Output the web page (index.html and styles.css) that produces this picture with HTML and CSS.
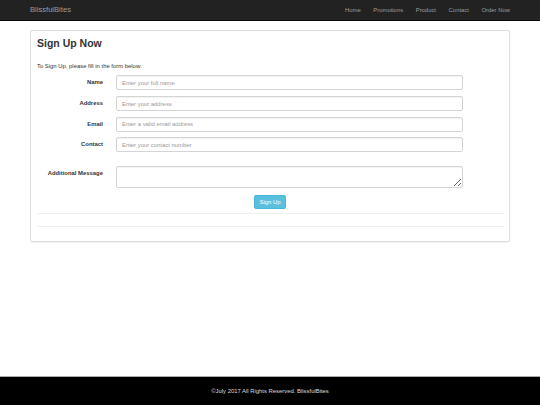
FILE: index.html
```html
<!DOCTYPE html>
<html>
<head>
<meta charset="utf-8">
<title>BlissfulBites - Sign Up</title>
<link rel="stylesheet" href="styles.css">
</head>
<body>
<div class="page">
  <nav class="navbar">
    <a class="brand" href="#">BlissfulBites</a>
    <ul class="nav">
      <li><a href="#">Home</a></li>
      <li><a href="#">Promotions</a></li>
      <li><a href="#">Product</a></li>
      <li><a href="#">Contact</a></li>
      <li><a href="#">Order Now</a></li>
    </ul>
  </nav>
  <main class="main">
    <div class="panel">
      <h3 class="title">Sign Up Now</h3>
      <p class="intro">To Sign Up, please fill in the form below:</p>
      <form class="form">
        <div class="row">
          <label class="label">Name</label>
          <input class="input" type="text" placeholder="Enter your full name">
        </div>
        <div class="row">
          <label class="label">Address</label>
          <input class="input" type="text" placeholder="Enter your address">
        </div>
        <div class="row">
          <label class="label">Email</label>
          <input class="input" type="text" placeholder="Enter a valid email address">
        </div>
        <div class="row">
          <label class="label">Contact</label>
          <input class="input" type="text" placeholder="Enter your contact number">
        </div>
        <div class="row row-msg">
          <label class="label">Additional Message</label>
          <textarea class="input textarea"></textarea>
        </div>
        <div class="actions">
          <button class="btn" type="button">Sign Up</button>
        </div>
      </form>
      <hr class="rule">
      <hr class="rule rule-2">
    </div>
  </main>
  <footer class="footer">©July 2017 All Rights Reserved. BlissfulBites</footer>
</div>
</body>
</html>
```
FILE: styles.css
```css
* { box-sizing: border-box; }
html, body { margin: 0; padding: 0; }
body {
  font-family: "Liberation Sans", Arial, sans-serif;
  font-size: 5.9px;
  line-height: 8.4px;
  color: #333;
  background: #fff;
}
.page {
  min-height: 405px;
  display: flex;
  flex-direction: column;
}
.navbar {
  height: 21px;
  background: #222;
  border-bottom: 1px solid #080808;
  display: flex;
  align-items: center;
  justify-content: space-between;
  padding: 0 30px;
}
.brand {
  color: #9d9d9d;
  text-decoration: none;
  font-size: 7.6px;
}
.nav {
  list-style: none;
  margin: 0;
  padding: 0;
  display: flex;
  gap: 12.6px;
}
.nav a {
  color: #9d9d9d;
  text-decoration: none;
  font-size: 5.9px;
}
.main {
  flex: 1;
  padding: 9px 30px 0;
}
.panel {
  border: 1px solid #ddd;
  border-radius: 2px;
  padding: 7px 6px 14px;
  box-shadow: 0 1px 1px rgba(0,0,0,0.05);
}
.title {
  margin: 0;
  font-size: 10.5px;
  line-height: 11px;
  font-weight: bold;
  color: #333;
}
.intro {
  margin: 13px 0 5px;
}
.form { margin: 0; }
.row {
  display: grid;
  grid-template-columns: 66px 347px;
  column-gap: 13px;
  margin-bottom: 5.7px;
}
.row-msg { margin-top: 14px; margin-bottom: 7px; }
.label {
  text-align: right;
  font-weight: bold;
  padding-top: 3px;
}
.input {
  height: 15px;
  border: 1px solid #d4d4d4;
  border-radius: 2px;
  padding: 0 5px;
  font-family: "Liberation Sans", Arial, sans-serif;
  font-size: 5.9px;
  color: #555;
  box-shadow: inset 0 1px 1px rgba(0,0,0,0.05);
  outline: none;
}
.input::placeholder { color: #999; }
.textarea {
  height: 22px;
  resize: vertical;
  padding: 2px 5px;
}
.actions {
  display: flex;
  justify-content: center;
}
.btn {
  width: 32px;
  height: 14px;
  background: #5bc0de;
  border: 1px solid #46b8da;
  border-radius: 2px;
  color: #fff;
  font-family: "Liberation Sans", Arial, sans-serif;
  font-size: 5.9px;
  padding: 0;
}
.rule {
  margin: 4px 0 0;
  border: 0;
  border-top: 1px solid #eee;
}
.rule-2 { margin-top: 12px; }
.footer {
  height: 29px;
  background: #000;
  border-top: 1px solid #aaa;
  color: #ddd;
  text-align: center;
  display: flex;
  align-items: center;
  justify-content: center;
  font-size: 5.9px;
}
```
